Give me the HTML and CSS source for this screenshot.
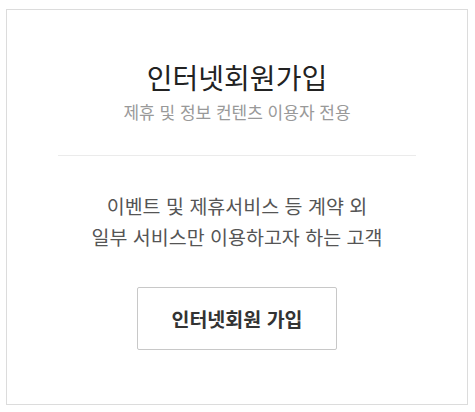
FILE: index.html
```html
<!DOCTYPE html>
<html lang="ko">
<head>
    <meta charset="UTF-8">
    <meta name="viewport" content="width=device-width, initial-scale=1.0">
    <title>인터넷회원가입</title>
    <link rel="stylesheet" href="styles.css">
</head>
<body>

<div class="join-box">
    <div class="join-head">
        <h2>인터넷회원가입</h2>
        <p class="sub">제휴 및 정보 컨텐츠 이용자 전용</p>
    </div>
    <p class="desc">이벤트 및 제휴서비스 등 계약 외<br>일부 서비스만 이용하고자 하는 고객</p>
    <a href="#" class="join-btn">인터넷회원 가입</a>
</div>

</body>
</html>
```

FILE: styles.css
```css
body {
    margin: 0;
    padding: 9px 7px 0 6px;
    background: #fff;
    font-family: "Noto Sans CJK KR", "Noto Sans", sans-serif;
}
.join-box {
    box-sizing: border-box;
    width: 462px;
    height: 396px;
    border: 1px solid #dcdcdc;
    display: flex;
    flex-direction: column;
    align-items: center;
    padding-top: 47px;
}
.join-head {
    width: 358px;
    text-align: center;
    border-bottom: 1px solid #ebebeb;
    padding-bottom: 31px;
}
h2 {
    margin: 0;
    font-size: 28px;
    font-weight: 400;
    line-height: 40px;
    color: #222;
}
.sub {
    margin: 3px 0 0;
    font-size: 17px;
    line-height: 24px;
    color: #999;
}
.desc {
    margin: 34px 0 0;
    text-align: center;
    font-size: 19.5px;
    line-height: 31px;
    color: #555;
}
.join-btn {
    margin-top: 35px;
    box-sizing: border-box;
    width: 200px;
    height: 63px;
    border: 1px solid #c8c8c8;
    border-radius: 2px;
    display: flex;
    justify-content: center;
    align-items: center;
    font-size: 19.5px;
    font-weight: bold;
    color: #333;
    text-decoration: none;
}
```
